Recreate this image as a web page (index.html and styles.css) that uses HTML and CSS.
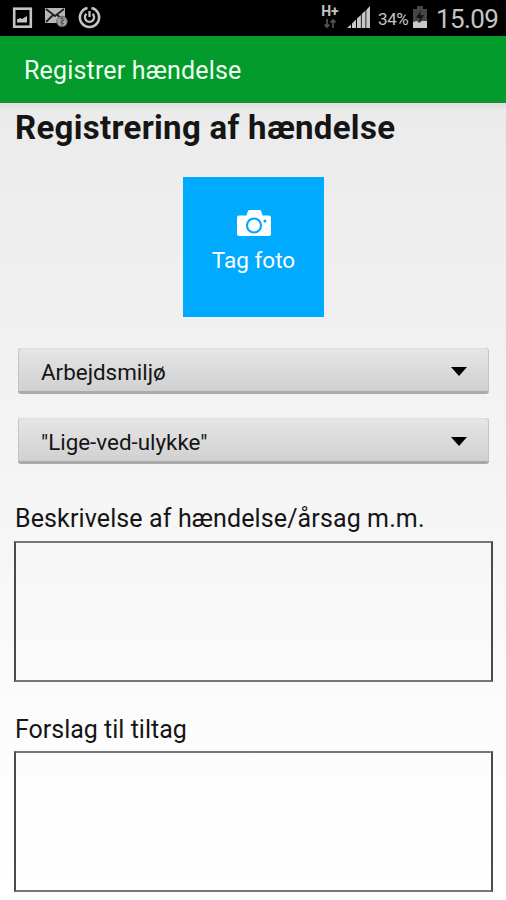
FILE: index.html
```
<!DOCTYPE html>
<html lang="da">
<head>
<meta charset="utf-8">
<title>Registrer hændelse</title>
<link rel="stylesheet" href="styles.css">
</head>
<body>
<div class="status">
  <svg class="notifications" width="110" height="36" viewBox="0 0 110 36">
    <rect x="14.2" y="8.7" width="16.6" height="18" fill="none" stroke="#c4c4c4" stroke-width="2.6"/>
    <path d="M17 22.5v-3l3-1.5 2 1 5-3v6.500z" fill="#c4c4c4"/>
    <path d="M45 8h20v15H45z" fill="#b8b8b8"/>
    <path d="M46 9l9 7 9-7M46 22l7-7M62 19l-6-5" fill="none" stroke="#222" stroke-width="1.8"/>
    <circle cx="62" cy="21.500" r="5.300" fill="#a0a0a0" stroke="#555" stroke-width=".8"/>
    <path d="M60 18.500q4-1 4 1t-3 2q-1 3 3 2M62 17v9" fill="none" stroke="#555" stroke-width="1"/>
    <path d="M91.500 8A9.600 9.600 0 1 1 87.500 8" fill="none" stroke="#c4c4c4" stroke-width="2.600"/>
    <path d="M92.500 13.800A4.600 4.600 0 1 1 86.500 13.800M89.500 11v6" fill="none" stroke="#c4c4c4" stroke-width="2.300"/>
  </svg>
  <div class="network"><span class="hplus">H+</span>
    <svg width="12" height="10" viewBox="0 0 12 10"><path d="M3 0v8M.5 5.500L3 8l2.500-2.500M9 9V1M6.500 3.500L9 1l2.500 2.500" fill="none" stroke="#555" stroke-width="1.700"/></svg>
  </div>
  <svg class="signal" width="24" height="24" viewBox="0 0 24 24">
    <path d="M0 23l4-3.500V23zM5 23v-4.500l4-4V23zM10 23v-9.500l3.900-3.500v13zM14.700 23V9l3.800-3.500V23zM19.300 23V5l3.700-4v22z" fill="#c8c8c8"/>
  </svg>
  <span class="percent">34%</span>
  <svg class="battery" width="16" height="24" viewBox="0 0 16 24">
    <path d="M5 1h6v3h4v19H1V4h4z" fill="#454545"/><path d="M9 5l-5 8h4l-1 5 5-8H8z" fill="#111"/><path d="M1 17l4-1 2 2 3-2h5v7H1z" fill="#c8c8c8"/>
  </svg>
  <span class="clock">15.09</span>
</div>
<header class="appbar"><span>Registrer hændelse</span></header>
<main class="page">
  <h1 class="title"><span>Registrering af hændelse</span></h1>
  <button class="photo" type="button">
    <svg width="36" height="28" viewBox="0 0 36 28">
      <path d="M3 6.500h7.500l1.200-4Q12 1 13.500 1h10Q25 1 25.300 2.500l1.200 4H33q2 0 2 2V25q0 2-2 2H3q-2 0-2-2V8.500q0-2 2-2z" fill="#fff"/>
      <circle cx="18" cy="16.500" r="7" fill="none" stroke="#00aaff" stroke-width="2.200"/><circle cx="29" cy="12" r="1.500" fill="#00aaff"/>
    </svg>
    <span class="photo-label">Tag foto</span>
  </button>
  <div class="select"><span class="env">Arbejdsmiljø</span><i class="arrow"></i></div>
  <div class="select"><span class="near">"Lige-ved-ulykke"</span><i class="arrow"></i></div>
  <label class="label" for="description"><span class="description">Beskrivelse af hændelse/årsag m.m.</span></label>
  <textarea class="box" id="description"></textarea>
  <label class="label second" for="proposal"><span class="proposal">Forslag til tiltag</span></label>
  <textarea class="box" id="proposal"></textarea>
</main>
</body>
</html>
```
FILE: styles.css
```
* { box-sizing: border-box; }
body { margin: 0; width: 506px; height: 900px; overflow: hidden; font-family: Roboto, sans-serif; color: #151515; background: #fff; }
.status { height: 36px; background: #000; color: #c4c4c4; display: flex; align-items: flex-start; }
.notifications { flex: none; }
.network { width: 20px; margin: 5px 0 0 210px; display: flex; flex-direction: column; align-items: center; }
.hplus { font-size: 14px; line-height: 13px; font-weight: 700; }
.network svg { margin-top: 1px; }
.signal { margin: 5px 0 0 7px; flex: none; }
.percent { width: 31px; margin: 8px 0 0 7px; font-size: 17px; line-height: 22px; letter-spacing: -.4px; white-space: nowrap; }
.battery { margin: 5px 0 0 3px; flex: none; }
.clock { margin: 4px 0 0 8px; font-size: 26px; line-height: 31px; letter-spacing: -.6px; }
.appbar { height: 67px; background: #039b2b; border-bottom: 1px solid #218c3c; padding: 19px 24px 0; color: #effff0; font-size: 25px; line-height: 31px; letter-spacing: .17px; }
.page { height: 797px; padding: 5px 14px 0; display: flex; flex-direction: column; background: linear-gradient(#dedede 0, #ebebeb 8px, #eee 120px, #f4f4f4 360px, #fcfcfc 620px, #fff 797px); }
.title { margin: 0; height: 69px; font-size: 33px; line-height: 40px; font-weight: 700; white-space: nowrap; padding-left: 1px; letter-spacing: .3px; }
.photo { width: 141px; height: 140px; margin: 0 0 31px 169px; padding: 32px 0 0; border: 0; background: #00aaff; color: #fff; display: flex; flex-direction: column; align-items: center; justify-content: flex-start; font-family: inherit; }
.photo svg { flex: none; }
.photo-label { font-size: 22.5px; line-height: 28px; margin-top: 9px; }
.select { flex: none; height: 46px; margin: 0 3px 24px 4px; padding: 4px 22px 0 23px; border-radius: 3px; background: linear-gradient(#e6e6e6, #d0d0d0); border-bottom: 3px solid #aaa; box-shadow: inset 1px 0 #c4c4c4, inset -1px 0 #c4c4c4, inset 0 1px #dedede; display: flex; align-items: center; justify-content: space-between; font-size: 22.4px; }
.arrow { border: 8px solid transparent; border-top: 9px solid #000; border-bottom: 0; }
.label { height: 53px; padding: 15px 0 0 1px; font-size: 25px; line-height: 31px; letter-spacing: .12px; white-space: nowrap; flex: none; }
.box { width: 479px; height: 141px; border: 2px solid; border-color: #777 #4a4a4a; background: transparent; resize: none; display: block; flex: none; outline: 0; }
.second { height: 69px; padding-top: 32px; letter-spacing: 0; }
```
